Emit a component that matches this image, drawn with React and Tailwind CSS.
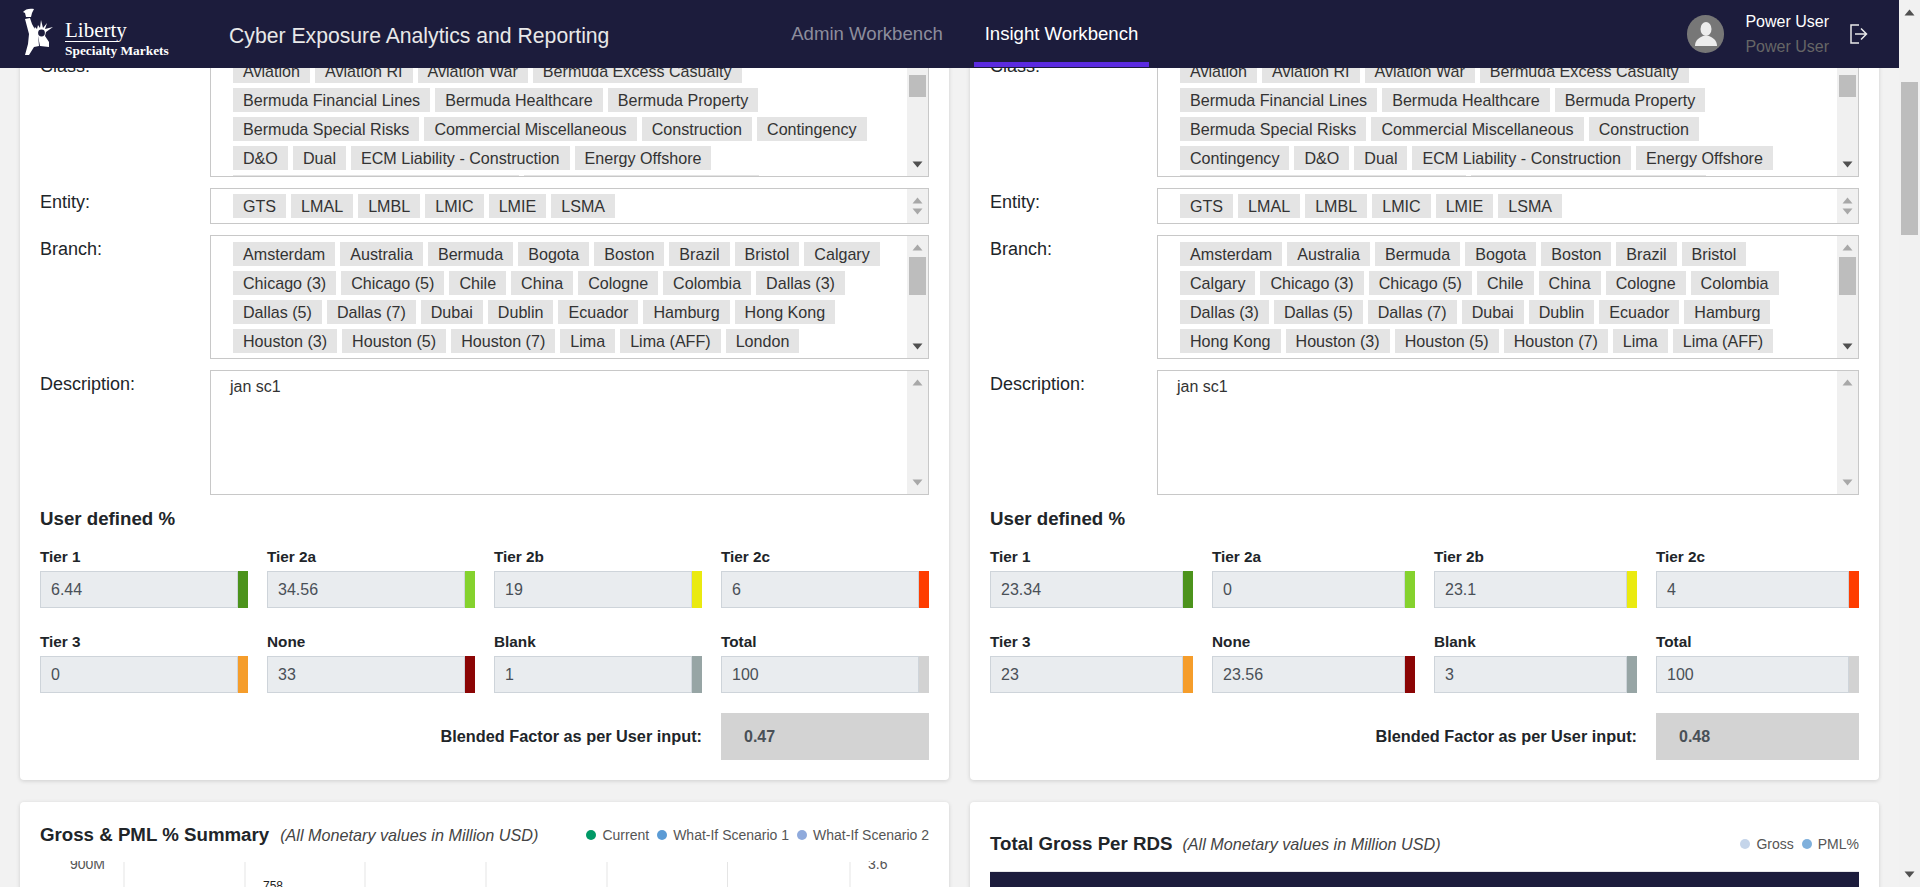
import React from "react";

const classL = ["Aviation","Aviation RI","Aviation War","Bermuda Excess Casualty","Bermuda Financial Lines","Bermuda Healthcare","Bermuda Property","Bermuda Special Risks","Commercial Miscellaneous","Construction","Contingency","D&O","Dual","ECM Liability - Construction","Energy Offshore","Environmental Liability - Construction","Environmental Liability - Other"];
const entity = ["GTS","LMAL","LMBL","LMIC","LMIE","LSMA"];
const branch = ["Amsterdam","Australia","Bermuda","Bogota","Boston","Brazil","Bristol","Calgary","Chicago (3)","Chicago (5)","Chile","China","Cologne","Colombia","Dallas (3)","Dallas (5)","Dallas (7)","Dubai","Dublin","Ecuador","Hamburg","Hong Kong","Houston (3)","Houston (5)","Houston (7)","Lima","Lima (AFF)","London","Los Angeles (3)","Los Angeles (5)","Los Angeles (7)","Madrid","Malaysia"];
const colours = ["bg-[#4c931c]","bg-[#85d22e]","bg-[#eaea10]","bg-[#ff3d00]","bg-[#f59d2b]","bg-[#8b0505]","bg-[#97a5a5]","bg-[#d2d2d2]"];
const names = ["Tier 1","Tier 2a","Tier 2b","Tier 2c","Tier 3","None","Blank","Total"];

function Arrow({ up, light }) {
  return (
    <svg width="11" height="7" viewBox="0 0 11 7" className="shrink-0">
      <path d={up ? "M5.5 0.5L10.5 6.5H0.5Z" : "M5.5 6.5L10.5 0.5H0.5Z"} fill={light ? "#a8a8a8" : "#505050"} />
    </svg>
  );
}

function Bar({ thumbTop, thumbH, light, height }) {
  return (
    <div className="w-[21px] shrink-0 bg-[#f0f0f0] flex flex-col items-center relative" style={{ height }}>
      <div className="absolute top-[8px]"><Arrow up light /></div>
      {thumbH ? <div className="absolute left-[2px] w-[17px] bg-[#bdbdbd]" style={{ top: thumbTop, height: thumbH }} /> : null}
      <div className="absolute bottom-[8px]"><Arrow light={light} /></div>
    </div>
  );
}

function Box({ tags, inner, h, thumbTop, thumbH, lightDown, children, top = 6 }) {
  return (
    <div className="flex-1 border border-[#c8c8c8] flex overflow-hidden bg-white" style={{ height: h }}>
      <div className="flex-1 overflow-hidden pl-[22px]" style={{ paddingTop: top }}>
        {tags ? (
          <div className="flex flex-wrap gap-x-[5px] gap-y-[5px]" style={{ width: inner }}>
            {tags.map((t) => (
              <span key={t} className="h-[24px] leading-[25px] px-[10px] bg-[#e4e4e4] text-[16.1px] text-[#333] whitespace-nowrap">{t}</span>
            ))}
          </div>
        ) : children}
      </div>
      <Bar height={h - 2} thumbTop={thumbTop} thumbH={thumbH} light={lightDown} />
    </div>
  );
}

function Row({ label, labelW, children }) {
  return (
    <div className="flex">
      <div className="shrink-0 text-[18px] leading-[22px] pt-[3px] text-[#212529]" style={{ width: labelW }}>{label}</div>
      {children}
    </div>
  );
}

function Tier({ name, value, colour }) {
  return (
    <div>
      <div className="text-[15.3px] leading-[18px] font-bold text-[#212529] mb-[5px]">{name}</div>
      <div className="flex h-[37px]">
        <div className="flex-1 bg-[#e9ecef] border border-[#ced4da] text-[16px] leading-[35px] pl-[10px] text-[#495057]">{value}</div>
        <div className={"w-[10px] shrink-0 " + colour} />
      </div>
    </div>
  );
}

function Panel({ labelW, inner, values, factor }) {
  return (
    <div className="bg-white rounded-[4px] shadow-[0_1px_4px_rgba(0,0,0,0.15)] -mt-[16px] px-[20px] pb-[20px] h-[728px]">
      <div className="flex flex-col gap-[11px]">
        <Row label="Class:" labelW={labelW}>
          <Box tags={classL} inner={inner} h={125} thumbTop={22} thumbH={22} />
        </Row>
        <Row label="Entity:" labelW={labelW}>
          <Box tags={entity} inner={inner} h={36} lightDown top={5} />
        </Row>
        <Row label="Branch:" labelW={labelW}>
          <Box tags={branch} inner={inner} h={124} thumbTop={21} thumbH={38} />
        </Row>
        <Row label="Description:" labelW={labelW}>
          <Box h={125} lightDown top={7}>
            <div className="text-[16px] leading-[18px] text-[#333] -ml-[3px]">jan sc1</div>
          </Box>
        </Row>
      </div>
      <div className="text-[18.7px] font-bold leading-[22px] text-[#212529] mt-[13px]">User defined %</div>
      <div className="grid grid-cols-4 gap-x-[19px] gap-y-[25px] mt-[18px]">
        {names.map((n, i) => <Tier key={n} name={n} value={values[i]} colour={colours[i]} />)}
      </div>
      <div className="grid grid-cols-4 gap-x-[19px] mt-[20px]">
        <div className="col-span-3 flex items-center justify-end text-[16.3px] font-bold text-[#212529]">Blended Factor as per User input:</div>
        <div className="h-[47px] bg-[#d3d3d3] pl-[23px] text-[16px] leading-[47px] font-bold text-[#495057]">{factor}</div>
      </div>
    </div>
  );
}

function Legend({ items }) {
  return (
    <div className="flex items-center gap-[8px] text-[14px] text-[#555]">
      {items.map(([c, t]) => (
        <span key={t} className="flex items-center gap-[6px]">
          <span className={"w-[10px] h-[10px] rounded-full " + c} />
          {t}
        </span>
      ))}
    </div>
  );
}

function Logo() {
  return (
    <div className="w-[229px] shrink-0 flex pl-[22px] pt-[8px] text-white">
      <svg width="36" height="48" viewBox="0 0 36 48" className="shrink-0">
        <path d="M1 4C3 1 8 0 12 1L10 5L9 9L4 9L3 5Z" fill="#fff" />
        <path d="M3 11L8 10L10 16L16 27L17 38L12 39L7 47L3 47L6 36L7 26Z" fill="#fff" />
        <path d="M11 24L13 19L15 21L16 17L18 20L19 12L21 20L25 15L23 21L31 19L24 24L23 28L27 34L27 39L18 38L16 28Z" fill="#fff" />
        <circle cx="19.5" cy="25" r="3.4" fill="#1c1c3c" />
      </svg>
      <div className="pl-[7px] font-['Liberation_Serif',serif]">
        <div className="text-[21px] leading-[24px] h-[23px] mt-[10px]">Liberty</div>
        <div className="h-px w-[53px] bg-white" />
        <div className="text-[13.4px] font-bold leading-[14px] mt-[2px] whitespace-nowrap">Specialty Markets</div>
      </div>
    </div>
  );
}

function Chart() {
  const xs = [124, 245, 365, 486, 607, 727.5, 850];
  return (
    <svg width="889" height="26" viewBox="40 861 889 26" className="mt-[13px] block overflow-hidden">
      {xs.map((x) => <line key={x} x1={x} x2={x} y1="862" y2="887" stroke="#e5e5e5" />)}
      <text x="105" y="869" textAnchor="end" fontSize="14" fill="#555" fontFamily="Liberation Sans">900M</text>
      <text x="868" y="869" fontSize="14" fill="#555" fontFamily="Liberation Sans">3.6</text>
      <text x="263" y="890" fontSize="12" fill="#222" fontFamily="Liberation Sans">758</text>
    </svg>
  );
}

export default function App() {
  return (
    <div className="w-[1920px] h-[887px] flex overflow-hidden bg-[#f2f2f2] font-['Liberation_Sans',Arial,sans-serif]">
      <div className="w-[1899px] flex flex-col">
        <header className="h-[68px] shrink-0 bg-[#1c1c3c] flex relative z-10">
          <Logo />
          <div className="w-[525px] text-[21.2px] leading-[68px] pt-[2px] text-[#e8e8e8] whitespace-nowrap">Cyber Exposure Analytics and Reporting</div>
          <div className="w-[220px] text-[18.6px] leading-[68px] text-center text-[#8d8d9c] whitespace-nowrap pl-[6px]">Admin Workbench</div>
          <div className="w-[175px] h-[67px] border-b-[5px] border-[#5b2be0] text-[18.6px] leading-[68px] text-center text-white whitespace-nowrap">Insight Workbench</div>
          <div className="flex-1 flex items-center justify-end">
            <div className="w-[37px] h-[38px] rounded-full bg-[#777] overflow-hidden flex items-center justify-center">
              <svg width="24" height="26" viewBox="0 0 24 26">
                <ellipse cx="12" cy="8" rx="5.5" ry="7" fill="#ececec" />
                <path d="M1 25C1 19 5 17 9 15H15C19 17 23 19 23 25Z" fill="#ececec" />
              </svg>
            </div>
            <div className="ml-[21px] text-[16px] leading-[25px]">
              <div className="text-white">Power User</div>
              <div className="text-[#666]">Power User</div>
            </div>
            <svg width="18" height="20" viewBox="0 0 18 20" fill="none" stroke="#e8e8e8" strokeWidth="1.5" className="ml-[21px] mr-[31px]">
              <path d="M9 1H1V19H9" />
              <path d="M5 10H16M11 4.5L16.5 10L11 15.5" />
            </svg>
          </div>
        </header>
        <main className="flex-1 min-h-0 overflow-hidden px-[20px]">
          <div className="grid grid-cols-[929px_909px] gap-x-[21px] gap-y-[22px]">
            <Panel labelW={170} inner={655} values={["6.44","34.56","19","6","0","33","1","100"]} factor="0.47" />
            <Panel labelW={167} inner={620} values={["23.34","0","23.1","4","23","23.56","3","100"]} factor="0.48" />
            <section className="bg-white rounded-[4px] shadow-[0_1px_4px_rgba(0,0,0,0.15)] h-[120px] px-[20px] pt-[20px]">
              <div className="flex items-center justify-between h-[26px]">
                <div className="flex items-baseline gap-[11px] text-[#212529]">
                  <span className="text-[18.7px] font-bold">Gross &amp; PML % Summary</span>
                  <span className="text-[16.2px] italic text-[#444]">(All Monetary values in Million USD)</span>
                </div>
                <Legend items={[["bg-[#009966]","Current"],["bg-[#5b9bd5]","What-If Scenario 1"],["bg-[#8faadc]","What-If Scenario 2"]]} />
              </div>
              <Chart />
            </section>
            <section className="bg-white rounded-[4px] shadow-[0_1px_4px_rgba(0,0,0,0.15)] h-[120px] px-[20px] pt-[29px]">
              <div className="flex items-center justify-between h-[26px]">
                <div className="flex items-baseline gap-[10px] text-[#212529]">
                  <span className="text-[18.7px] font-bold">Total Gross Per RDS</span>
                  <span className="text-[16.2px] italic text-[#444]">(All Monetary values in Million USD)</span>
                </div>
                <Legend items={[["bg-[#c5d5ea]","Gross"],["bg-[#7fb0dc]","PML%"]]} />
              </div>
              <div className="h-[40px] mt-[14px] bg-[#1c1c3c] border-t border-[#e8e8e8]" />
            </section>
          </div>
        </main>
      </div>
      <div className="w-[21px] h-[887px] bg-[#f1f1f1] relative flex flex-col items-center">
        <div className="mt-[9px]"><Arrow up /></div>
        <div className="absolute left-[2px] top-[82px] w-[17px] h-[153px] bg-[#bdbdbd]" />
        <div className="absolute bottom-[9px]"><Arrow /></div>
      </div>
    </div>
  );
}
